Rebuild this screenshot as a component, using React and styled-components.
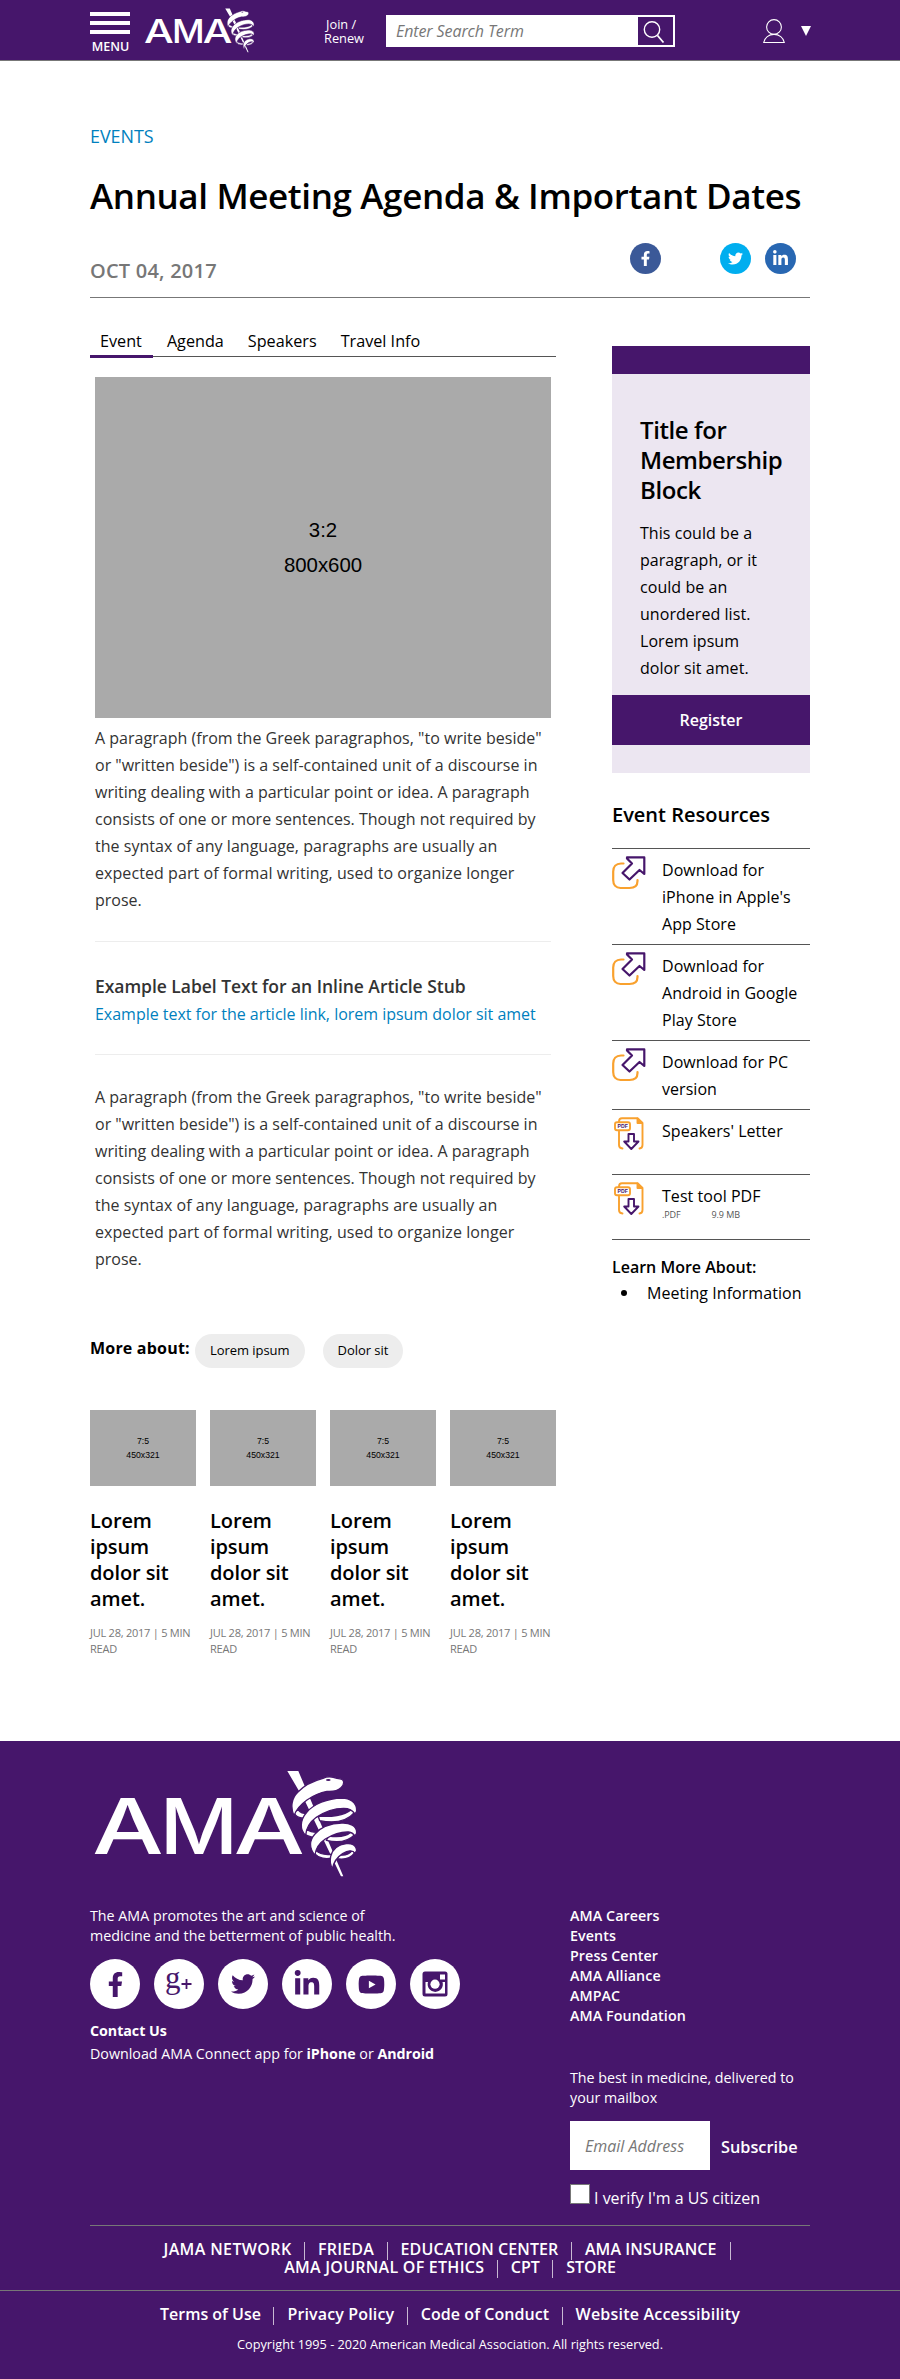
import React from "react";
import styled, { createGlobalStyle, css } from "styled-components";
import { FaFacebookF, FaTwitter, FaLinkedinIn, FaYoutube } from "react-icons/fa";

const purple = "#46166b";
const grey = "#777777";

const GlobalStyle = createGlobalStyle`
  * { box-sizing: border-box; }
  body {
    margin: 0;
    background: #fff;
    color: #000;
    font-family: "Open Sans", "Noto Sans", sans-serif;
    font-size: 16px;
    line-height: 27px;
  }
  h1, h2, h3, p, ul { margin: 0; padding: 0; }
  ul { list-style: none; }
  a { color: inherit; text-decoration: none; }
`;

const Container = styled.div`
  width: 720px;
  margin: 0 auto;
`;

/* ---------- header ---------- */

const Header = styled.header`
  height: 61px;
  background: ${purple};
  border-bottom: 1px solid ${grey};
  color: #fff;
`;

const HeaderRow = styled(Container)`
  display: flex;
  align-items: flex-start;
  & > * { flex-shrink: 0; }
`;

const MenuButton = styled.a`
  width: 40px;
  margin-top: 12px;
  display: flex;
  flex-direction: column;
  gap: 5px;
`;

const MenuBar = styled.span`
  height: 4px;
  background: #fff;
`;

const MenuLabel = styled.span`
  padding-left: 1px;
  font-size: 12.5px;
  font-weight: 600;
  line-height: 16px;
  text-align: center;
  white-space: nowrap;
`;

const HeaderLogo = styled.a`
  display: block;
  margin: 8px 0 0 15px;
  line-height: 0;
`;

const JoinLink = styled.a`
  margin: 17px 0 0 70px;
  width: 62px;
  font-size: 12.8px;
  line-height: 14px;
  white-space: nowrap;
`;

const JoinFirst = styled.span`
  display: block;
  padding-left: 2px;
`;

const SearchBox = styled.div`
  width: 289px;
  height: 32px;
  margin-top: 15px;
  padding: 2px;
  background: #fff;
  display: flex;
`;

const SearchInput = styled.span`
  flex: 1;
  padding-left: 8px;
  color: ${grey};
  font-size: 16px;
  font-style: italic;
  letter-spacing: -0.1px;
  line-height: 28px;
`;

const SearchButton = styled.span`
  width: 35px;
  background: ${purple};
  padding: 4px 0 0 5px;
  line-height: 0;
`;

const UserIcon = styled.span`
  margin: 19px 0 0 88px;
  line-height: 0;
`;

const Caret = styled.span`
  width: 0;
  height: 0;
  margin: 26px 0 0 16px;
  border: 5px solid transparent;
  border-top: 10px solid #fff;
  border-bottom: 0;
`;

/* ---------- page title ---------- */

const Eyebrow = styled.a`
  display: block;
  margin-top: 61px;
  color: #007fbe;
  font-size: 17.9px;
  line-height: 28px;
`;

const PageTitle = styled.h1`
  margin-top: 26px;
  font-size: 35px;
  font-weight: 600;
  letter-spacing: -0.37px;
  line-height: 39px;
  padding-bottom: 1px;
  white-space: nowrap;
`;

const MetaRow = styled.div`
  height: 82px;
  display: flex;
  justify-content: space-between;
  border-bottom: 1px solid ${grey};
`;

const MetaDate = styled.span`
  margin-top: 41px;
  color: ${grey};
  font-size: 20px;
  font-weight: 600;
  letter-spacing: 0.22px;
  line-height: 28px;
`;

const ShareList = styled.div`
  display: flex;
  gap: 14px;
  margin: 27px 14px 0 0;
`;

const ShareButton = styled.a`
  width: 31px;
  height: 31px;
  border-radius: 50%;
  background: ${(p) => p.$color};
  color: #fff;
  display: flex;
  align-items: center;
  justify-content: center;
  margin-right: ${(p) => (p.$gap ? "45px" : 0)};
`;

/* ---------- main column ---------- */

const Columns = styled.div`
  display: flex;
  justify-content: space-between;
  align-items: flex-start;
  height: 1443px;
`;

const Main = styled.main`
  width: 466px;
  padding-top: 28px;
`;

const Tabs = styled.nav`
  display: flex;
  height: 31px;
  border-bottom: 1px solid #555;
`;

const Tab = styled.a`
  height: ${(p) => (p.$active ? "32px" : "30px")};
  padding: 0 10px;
  margin-right: 4px;
  font-size: 16.2px;
  line-height: 30px;
  white-space: nowrap;
  ${(p) => p.$active && css`padding-right: 11px; border-bottom: 3px solid ${purple};`}
`;

const Article = styled.article`
  padding: 20px 5px 0;
  color: #333;
`;

const Placeholder = styled.div`
  display: flex;
  flex-direction: column;
  align-items: center;
  justify-content: center;
  background: #aaa;
  color: #000;
  font-family: "Liberation Sans", Arial, sans-serif;
  height: ${(p) => (p.$large ? "341px" : "76px")};
  font-size: ${(p) => (p.$large ? "20.4px" : "8.7px")};
  line-height: ${(p) => (p.$large ? "35px" : "14.5px")};
`;

const Paragraph = styled.p`
  margin-top: ${(p) => p.$top};
  white-space: nowrap;
`;

const ParagraphLine = styled.span`
  display: block;
  letter-spacing: ${(p) => p.$spacing}px;
`;

const Stub = styled.section`
  margin-top: 27px;
  height: 114px;
  padding-top: 31px;
  border-top: 1px solid #ededed;
  border-bottom: 1px solid #ededed;
`;

const StubLabel = styled.h3`
  font-size: 17.5px;
  font-weight: 600;
  line-height: 27px;
  letter-spacing: -0.04px;
  white-space: nowrap;
`;

const StubLink = styled.a`
  display: block;
  padding-top: 1px;
  color: #007fbe;
  letter-spacing: -0.02px;
  white-space: nowrap;
`;

const TopicRow = styled.div`
  display: flex;
  margin-top: 61px;
`;

const TopicLabel = styled.span`
  width: 105px;
  padding-top: 1px;
  font-weight: 700;
  letter-spacing: 0.2px;
  white-space: nowrap;
`;

const Pill = styled.a`
  height: 34px;
  padding: 0 15px;
  margin-right: 18px;
  border-radius: 17px;
  background: #ededed;
  font-size: 13px;
  line-height: 32px;
  letter-spacing: -0.05px;
  white-space: nowrap;
`;

const CardGrid = styled.div`
  display: grid;
  grid-template-columns: repeat(4, 106px);
  gap: 14px;
  margin-top: 42px;
`;

const CardTitle = styled.h3`
  margin-top: 22px;
  font-size: 20px;
  font-weight: 600;
  letter-spacing: -0.1px;
  line-height: 26px;
`;

const CardMeta = styled.p`
  margin-top: 13px;
  color: ${grey};
  font-size: 11px;
  letter-spacing: -0.24px;
  line-height: 16px;
  white-space: nowrap;
`;

/* ---------- sidebar ---------- */

const Sidebar = styled.aside`
  width: 198px;
  padding-top: 48px;
`;

const MemberBlock = styled.section`
  height: 427px;
  border-top: 28px solid ${purple};
  background: #ece6f1;
`;

const MemberTitle = styled.h2`
  padding: 41px 0 0 28px;
  font-size: 24px;
  font-weight: 600;
  letter-spacing: -0.42px;
  line-height: 30px;
`;

const MemberText = styled.p`
  padding: 15px 0 0 28px;
  letter-spacing: 0.05px;
  white-space: nowrap;
`;

const RegisterButton = styled.a`
  display: block;
  height: 50px;
  margin-top: 13px;
  background: ${purple};
  color: #fff;
  font-weight: 600;
  line-height: 50px;
  text-align: center;
`;

const ResourcesTitle = styled.h2`
  margin-top: 28px;
  padding-bottom: 19px;
  font-size: 20px;
  font-weight: 600;
  letter-spacing: 0;
  line-height: 28px;
  border-bottom: 1px solid #555;
`;

const ResourceItem = styled.li`
  display: flex;
  min-height: 65px;
  padding: 8px 0 6px;
  border-bottom: 1px solid #555;
`;

const ResourceIcon = styled.span`
  width: 50px;
  margin-top: -1px;
  flex: none;
  line-height: 0;
`;

const ResourceText = styled.span`
  letter-spacing: 0.05px;
  white-space: nowrap;
`;

const FileMeta = styled.span`
  display: flex;
  gap: 31px;
  margin-top: -1px;
  color: #555;
  font-size: 9px;
  letter-spacing: -0.1px;
  line-height: 12px;
`;

const LearnTitle = styled.h3`
  margin-top: 13px;
  font-size: 16px;
  font-weight: 600;
  line-height: 28px;
  white-space: nowrap;
`;

const LearnItem = styled.li`
  display: flex;
  align-items: center;
  gap: 20px;
  padding-left: 9px;
  margin-top: -1px;
  line-height: 26px;
  letter-spacing: 0.06px;
  white-space: nowrap;
  &::before {
    content: "";
    width: 6px;
    height: 6px;
    border-radius: 50%;
    background: #000;
  }
`;

/* ---------- footer ---------- */

const Footer = styled.footer`
  height: 638px;
  background: ${purple};
  color: #fff;
  font-size: 14.27px;
  line-height: 20px;
`;

const FooterLogo = styled.a`
  display: block;
  padding: 30px 0 0 4.5px;
  height: 165px;
  line-height: 0;
`;

const FooterColumns = styled.div`
  display: flex;
  justify-content: space-between;
  height: 320px;
  border-bottom: 1px solid ${grey};
`;

const FooterAbout = styled.div`
  width: 400px;
  white-space: nowrap;
`;

const FooterSocial = styled.div`
  display: flex;
  gap: 14px;
  margin: 13px 0 12px;
`;

const SocialCircle = styled.a`
  width: 50px;
  height: 50px;
  border-radius: 50%;
  background: #fff;
  color: ${purple};
  display: flex;
  align-items: center;
  justify-content: center;
`;

const FooterStrong = styled.strong`
  font-weight: 700;
  letter-spacing: -0.05px;
`;

const DownloadLine = styled.p`
  margin-top: 3px;
`;

const FooterLinks = styled.ul`
  width: 240px;
  font-weight: 600;
`;

const FooterLink = styled.li`
  letter-spacing: 0.08px;
`;

const Newsletter = styled.li`
  margin-top: 42px;
  font-weight: 400;
`;

const SubscribeRow = styled.div`
  display: flex;
  height: 49px;
  margin-top: 13px;
`;

const EmailInput = styled.span`
  width: 140px;
  height: 49px;
  padding-left: 15px;
  background: #fff;
  color: ${grey};
  font-size: 16px;
  font-style: italic;
  line-height: 50px;
  white-space: nowrap;
`;

const SubscribeButton = styled.span`
  margin-left: 11px;
  font-size: 16.3px;
  font-weight: 600;
  line-height: 52px;
`;

const VerifyRow = styled.label`
  display: flex;
  margin-top: 14px;
  font-size: 16px;
  line-height: 28px;
  white-space: nowrap;
`;

const Checkbox = styled.span`
  width: 20px;
  height: 20px;
  margin-right: 4px;
  background: #fff;
  border: 1px solid #777;
`;

const LinkBar = styled.div`
  display: flex;
  flex-direction: column;
  align-items: center;
  padding-top: 16px;
  font-size: 16px;
  font-weight: 600;
`;

const LinkLine = styled.div`
  display: flex;
  height: 18px;
  line-height: 14px;
  padding-right: ${(p) => (p.$trailing ? "6px" : 0)};
  white-space: nowrap;
`;

const BarLink = styled.a`
  height: 18px;
  letter-spacing: ${(p) => p.$spacing || 0}px;
  & + & { border-left: 1px solid #c8b9d3; margin-left: 12.5px; padding-left: 13px; }
  ${(p) => p.$trailing && css`border-right: 1px solid #c8b9d3; padding-right: 13px;`}
`;

const FullRule = styled.div`
  height: 1px;
  margin-top: 12px;
  background: ${grey};
`;

const Copyright = styled.p`
  margin-top: 9px;
  font-size: 12.72px;
  line-height: 20px;
  text-align: center;
`;

/* ---------- drawings ---------- */

const Logo = ({ width, height }) => (
  <svg width={width} height={height} viewBox="44 123 784 318" overflow="visible">
    <g fill="#fff" fontFamily="Inter, sans-serif" fontWeight="500" fontSize="231">
      <text x="36" y="371" textLength="214" lengthAdjust="spacingAndGlyphs">A</text>
      <text x="238" y="371" textLength="235" lengthAdjust="spacingAndGlyphs">M</text>
      <text x="460" y="371" textLength="213" lengthAdjust="spacingAndGlyphs">A</text>
    </g>
    <path fill="#fff" d="M621 123H654L789 439H782L675 215Z" />
    <g fill="#fff" stroke={purple} strokeWidth="4" strokeLinejoin="round">
      <path d="M640 245C645 262 665 268 684 263L690 250C672 253 660 247 654 240Z" />
      <path d="M822 248C800 274 760 280 718 272L714 258C752 262 792 256 812 240Z" />
      <path d="M670 308C680 322 705 324 722 318L724 306C702 309 688 305 680 298Z" />
      <path d="M823 314C804 334 772 339 738 331L746 318C778 322 800 318 812 306Z" />
      <path d="M702 370C715 385 738 389 756 383L754 373C733 375 716 371 708 362Z" />
      <path d="M824 367C812 385 795 390 770 386L778 375C797 377 808 372 815 362Z" />
      <path d="M790 158C791 149 783 146 770 145C755 139 740 139 728 145C698 153 670 168 653 186C633 205 630 232 641 257C648 238 662 223 680 210C700 196 718 188 740 184C757 185 774 181 782 173C788 168 790 164 790 158Z" />
      <path d="M829 242C830 218 808 204 785 204C740 205 700 223 680 246C658 271 658 300 676 316C678 294 690 275 708 262C733 245 765 235 790 235C808 235 818 242 823 251C827 248 829 246 829 242Z" />
      <path d="M829 308C830 288 808 278 785 279C750 280 720 293 704 312C686 332 688 356 704 376C706 355 717 339 735 327C757 314 785 305 805 306C815 307 820 312 823 317C827 314 829 312 829 308Z" />
      <path d="M829 362C828 344 812 339 798 341C774 344 756 358 751 380C748 397 751 408 757 415C760 397 770 382 787 371C802 362 817 358 824 370Z" />
    </g>
    <ellipse cx="744" cy="150" rx="7" ry="3" fill={purple} />
  </svg>
);

const SearchGlyph = () => (
  <svg width="24" height="24" viewBox="0 0 24 24" fill="none" stroke="#fff">
    <circle cx="9" cy="8.500" r="7.700" strokeWidth="1.400" />
    <path d="M14.500 14.500L20.500 21.500" strokeWidth="1.800" />
  </svg>
);

const UserGlyph = () => (
  <svg width="22" height="25" viewBox="0 0 22 25" fill="none" stroke="#fff" strokeWidth="1.100">
    <circle cx="11" cy="8" r="7.400" />
    <path d="M.7 23.500C1.500 18.500 6 15.400 11 15.400S20.500 18.500 21.300 23.500Z" />
  </svg>
);

const ExternalGlyph = () => (
  <svg width="34" height="34" viewBox="0 0 34 34" fill="none" strokeWidth="2.200" strokeLinejoin="round" strokeLinecap="round">
    <path stroke="#f9a12e" d="M11.500 7.500H9C4 7.500 1.200 11 1.200 15.500V24C1.200 29 4 32 8.500 32H17.500C22.500 32 25.500 29.500 25.500 25V24" />
    <path stroke={purple} d="M15 1.400H32.300V18L27.500 14L17.500 23.500L10.500 17L20 7.500L15 2.500Z" />
  </svg>
);

const PdfGlyph = () => (
  <svg width="34" height="34" viewBox="0 0 34 34" fill="none" strokeWidth="1.900" strokeLinejoin="round" strokeLinecap="round">
    <g stroke="#f9a12e">
      <path d="M7 4.500C7 2 8 1.200 10 1.200H25.500L30.500 6V28C30.500 30.300 29.500 31.300 27.500 31.500M7 14.500V28C7 30.300 8 31.300 10.500 31.500" />
      <path fill="#f9a12e" d="M25.500 1.500V6H30Z" />
      <rect x="3" y="5.300" width="15" height="8" rx="2" />
    </g>
    <text x="5.500" y="11.200" fill={purple} fontSize="5.200" fontWeight="700" fontFamily="Liberation Sans, sans-serif">PDF</text>
    <path stroke={purple} d="M16.500 17H22V24.500H26.500L19.300 32L12.200 24.500H16.500Z" />
  </svg>
);

const GooglePlusGlyph = () => (
  <svg width="46" height="46" viewBox="-9 -9 46 46">
    <text x="0" y="18" fill={purple} fontSize="31" fontFamily="Liberation Serif, serif">g</text>
    <path d="M16.500 14H26.500M21.500 9V19" stroke={purple} strokeWidth="1.800" />
  </svg>
);

const InstagramGlyph = () => (
  <svg width="26" height="26" viewBox="0 0 26 26">
    <rect x=".5" y=".5" width="25" height="25" rx="2.500" fill={purple} />
    <rect x="18" y="3.500" width="5" height="5" fill="#fff" />
    <path fill="#fff" d="M3.500 11H6A7.600 7.600 0 1 0 20.500 11H23V22.500H3.500Z" />
    <circle cx="13" cy="13.200" r="6" fill={purple} />
    <circle cx="13" cy="13.200" r="4.600" fill="#fff" />
  </svg>
);

/* ---------- content ---------- */

const paragraph = [
  ['A paragraph (from the Greek paragraphos, "to write beside"', 0.02],
  ['or "written beside") is a self-contained unit of a discourse in', 0],
  ["writing dealing with a particular point or idea. A paragraph", 0],
  ["consists of one or more sentences. Though not required by", 0.01],
  ["the syntax of any language, paragraphs are usually an", 0.03],
  ["expected part of formal writing, used to organize longer", 0.07],
  ["prose.", 0],
];

const memberText = ["This could be a", "paragraph, or it", "could be an", "unordered list.", "Lorem ipsum", "dolor sit amet."];

const resources = [
  { lines: ["Download for", "iPhone in Apple's", "App Store"] },
  { lines: ["Download for", "Android in Google", "Play Store"] },
  { lines: ["Download for PC", "version"] },
  { lines: ["Speakers' Letter"], pdf: true },
  { lines: ["Test tool PDF"], pdf: true, type: ".PDF", size: "9.9 MB" },
];

const footerLinks = ["AMA Careers", "Events", "Press Center", "AMA Alliance", "AMPAC", "AMA Foundation"];

const Lines = ({ items }) =>
  items.map((t, i) => (
    <React.Fragment key={i}>
      {i > 0 && <br />}
      {t}
    </React.Fragment>
  ));

const Copy = ({ top }) => (
  <Paragraph $top={top}>
    {paragraph.map(([text, spacing]) => (
      <ParagraphLine key={text} $spacing={spacing}>{text}</ParagraphLine>
    ))}
  </Paragraph>
);

export default function App() {
  return (
    <>
      <GlobalStyle />
      <Header>
        <HeaderRow>
          <MenuButton>
            <MenuBar /><MenuBar /><MenuBar />
            <MenuLabel>MENU</MenuLabel>
          </MenuButton>
          <HeaderLogo><Logo width="109" height="45" /></HeaderLogo>
          <JoinLink><JoinFirst>Join /</JoinFirst>Renew</JoinLink>
          <SearchBox>
            <SearchInput>Enter Search Term</SearchInput>
            <SearchButton><SearchGlyph /></SearchButton>
          </SearchBox>
          <UserIcon><UserGlyph /></UserIcon>
          <Caret />
        </HeaderRow>
      </Header>

      <Container>
        <Eyebrow>EVENTS</Eyebrow>
        <PageTitle>Annual Meeting Agenda &amp; Important Dates</PageTitle>
        <MetaRow>
          <MetaDate>OCT 04, 2017</MetaDate>
          <ShareList>
            <ShareButton $color="#3b5998" $gap><FaFacebookF size={15} /></ShareButton>
            <ShareButton $color="#00aeef"><FaTwitter size={15} /></ShareButton>
            <ShareButton $color="#2867b2"><FaLinkedinIn size={17} /></ShareButton>
          </ShareList>
        </MetaRow>

        <Columns>
          <Main>
            <Tabs>
              <Tab $active>Event</Tab>
              <Tab>Agenda</Tab>
              <Tab>Speakers</Tab>
              <Tab>Travel Info</Tab>
            </Tabs>
            <Article>
              <Placeholder $large><span>3:2</span><span>800x600</span></Placeholder>
              <Copy top="7px" />
              <Stub>
                <StubLabel>Example Label Text for an Inline Article Stub</StubLabel>
                <StubLink>Example text for the article link, lorem ipsum dolor sit amet</StubLink>
              </Stub>
              <Copy top="29px" />
            </Article>
            <TopicRow>
              <TopicLabel>More about:</TopicLabel>
              <Pill>Lorem ipsum</Pill>
              <Pill>Dolor sit</Pill>
            </TopicRow>
            <CardGrid>
              {[0, 1, 2, 3].map((n) => (
                <div key={n}>
                  <Placeholder><span>7:5</span><span>450x321</span></Placeholder>
                  <CardTitle><Lines items={["Lorem", "ipsum", "dolor sit", "amet."]} /></CardTitle>
                  <CardMeta>JUL 28, 2017 | 5 MIN<br />READ</CardMeta>
                </div>
              ))}
            </CardGrid>
          </Main>

          <Sidebar>
            <MemberBlock>
              <MemberTitle>Title for<br />Membership<br />Block</MemberTitle>
              <MemberText><Lines items={memberText} /></MemberText>
              <RegisterButton>Register</RegisterButton>
            </MemberBlock>
            <ResourcesTitle>Event Resources</ResourcesTitle>
            <ul>
              {resources.map((r, i) => (
                <ResourceItem key={i}>
                  <ResourceIcon>{r.pdf ? <PdfGlyph /> : <ExternalGlyph />}</ResourceIcon>
                  <ResourceText>
                    <Lines items={r.lines} />
                    {r.type && <FileMeta><span>{r.type}</span><span>{r.size}</span></FileMeta>}
                  </ResourceText>
                </ResourceItem>
              ))}
            </ul>
            <LearnTitle>Learn More About:</LearnTitle>
            <ul><LearnItem>Meeting Information</LearnItem></ul>
          </Sidebar>
        </Columns>
      </Container>

      <Footer>
        <Container>
          <FooterLogo><Logo width="261.300" height="106" /></FooterLogo>
          <FooterColumns>
            <FooterAbout>
              <p>The AMA promotes the art and science of<br />medicine and the betterment of public health.</p>
              <FooterSocial>
                <SocialCircle><FaFacebookF size={25} /></SocialCircle>
                <SocialCircle><GooglePlusGlyph /></SocialCircle>
                <SocialCircle><FaTwitter size={24} /></SocialCircle>
                <SocialCircle><FaLinkedinIn size={28} /></SocialCircle>
                <SocialCircle><FaYoutube size={27} /></SocialCircle>
                <SocialCircle><InstagramGlyph /></SocialCircle>
              </FooterSocial>
              <FooterStrong>Contact Us</FooterStrong>
              <DownloadLine>
                Download AMA Connect app for <FooterStrong>iPhone</FooterStrong> or <FooterStrong>Android</FooterStrong>
              </DownloadLine>
            </FooterAbout>
            <FooterLinks>
              {footerLinks.map((t) => <FooterLink key={t}>{t}</FooterLink>)}
              <Newsletter>
                The best in medicine, delivered to<br />your mailbox
                <SubscribeRow>
                  <EmailInput>Email Address</EmailInput>
                  <SubscribeButton>Subscribe</SubscribeButton>
                </SubscribeRow>
                <VerifyRow><Checkbox />I verify I'm a US citizen</VerifyRow>
              </Newsletter>
            </FooterLinks>
          </FooterColumns>
        </Container>
        <LinkBar>
          <LinkLine $trailing>
            <BarLink $spacing={0.38}>JAMA NETWORK</BarLink>
            <BarLink $spacing={0.2}>FRIEDA</BarLink>
            <BarLink $spacing={0.1}>EDUCATION CENTER</BarLink>
            <BarLink $spacing={0.08} $trailing>AMA INSURANCE</BarLink>
          </LinkLine>
          <LinkLine>
            <BarLink $spacing={0.26}>AMA JOURNAL OF ETHICS</BarLink>
            <BarLink>CPT</BarLink>
            <BarLink>STORE</BarLink>
          </LinkLine>
        </LinkBar>
        <FullRule />
        <LinkBar>
          <LinkLine>
            <BarLink>Terms of Use</BarLink>
            <BarLink $spacing={0.15}>Privacy Policy</BarLink>
            <BarLink $spacing={0.06}>Code of Conduct</BarLink>
            <BarLink $spacing={0.2}>Website Accessibility</BarLink>
          </LinkLine>
        </LinkBar>
        <Copyright>Copyright 1995 - 2020 American Medical Association. All rights reserved.</Copyright>
      </Footer>
    </>
  );
}
